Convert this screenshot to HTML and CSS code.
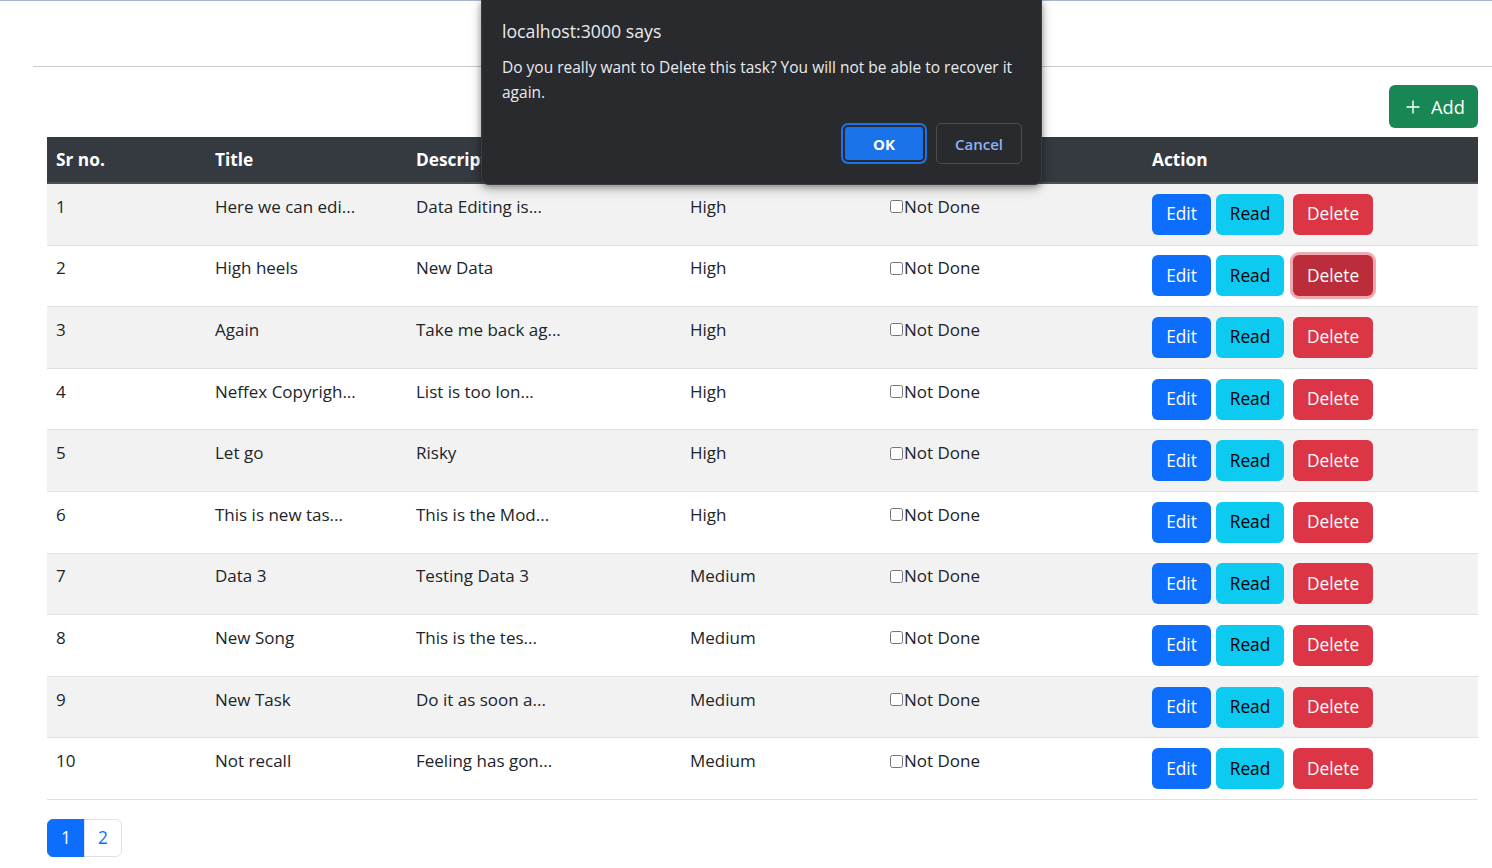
FILE: index.html
```html
<!DOCTYPE html>
<html lang="en">
<head>
<meta charset="utf-8">
<title>Tasks</title>
<link rel="stylesheet" href="styles.css">
</head>
<body>
<div class="topline"></div>
<div class="navspace"></div>
<hr class="rule">
<main class="main">
  <div class="toolbar">
    <button class="btn btn-add"><svg class="plus" viewBox="0 0 16 16" width="16" height="16"><path d="M8 1.5v13M1.5 8h13" stroke="#fff" stroke-width="1.4" fill="none"/></svg>Add</button>
  </div>
  <table class="tasks">
    <colgroup>
      <col class="c1"><col class="c2"><col class="c3"><col class="c4"><col class="c5"><col class="c6">
    </colgroup>
    <thead>
      <tr><th>Sr no.</th><th>Title</th><th>Description</th><th>Priority</th><th>Status</th><th>Action</th></tr>
    </thead>
    <tbody>
      <tr><td>1</td><td>Here we can edi...</td><td>Data Editing is...</td><td>High</td><td><label class="chk"><input type="checkbox">Not Done</label></td><td><div class="acts"><button class="btn btn-edit">Edit</button><button class="btn btn-read">Read</button><button class="btn btn-del">Delete</button></div></td></tr>
      <tr><td>2</td><td>High heels</td><td>New Data</td><td>High</td><td><label class="chk"><input type="checkbox">Not Done</label></td><td><div class="acts"><button class="btn btn-edit">Edit</button><button class="btn btn-read">Read</button><button class="btn btn-del is-focus">Delete</button></div></td></tr>
      <tr><td>3</td><td>Again</td><td>Take me back ag...</td><td>High</td><td><label class="chk"><input type="checkbox">Not Done</label></td><td><div class="acts"><button class="btn btn-edit">Edit</button><button class="btn btn-read">Read</button><button class="btn btn-del">Delete</button></div></td></tr>
      <tr><td>4</td><td>Neffex Copyrigh...</td><td>List is too lon...</td><td>High</td><td><label class="chk"><input type="checkbox">Not Done</label></td><td><div class="acts"><button class="btn btn-edit">Edit</button><button class="btn btn-read">Read</button><button class="btn btn-del">Delete</button></div></td></tr>
      <tr><td>5</td><td>Let go</td><td>Risky</td><td>High</td><td><label class="chk"><input type="checkbox">Not Done</label></td><td><div class="acts"><button class="btn btn-edit">Edit</button><button class="btn btn-read">Read</button><button class="btn btn-del">Delete</button></div></td></tr>
      <tr><td>6</td><td>This is new tas...</td><td>This is the Mod...</td><td>High</td><td><label class="chk"><input type="checkbox">Not Done</label></td><td><div class="acts"><button class="btn btn-edit">Edit</button><button class="btn btn-read">Read</button><button class="btn btn-del">Delete</button></div></td></tr>
      <tr><td>7</td><td>Data 3</td><td>Testing Data 3</td><td>Medium</td><td><label class="chk"><input type="checkbox">Not Done</label></td><td><div class="acts"><button class="btn btn-edit">Edit</button><button class="btn btn-read">Read</button><button class="btn btn-del">Delete</button></div></td></tr>
      <tr><td>8</td><td>New Song</td><td>This is the tes...</td><td>Medium</td><td><label class="chk"><input type="checkbox">Not Done</label></td><td><div class="acts"><button class="btn btn-edit">Edit</button><button class="btn btn-read">Read</button><button class="btn btn-del">Delete</button></div></td></tr>
      <tr><td>9</td><td>New Task</td><td>Do it as soon a...</td><td>Medium</td><td><label class="chk"><input type="checkbox">Not Done</label></td><td><div class="acts"><button class="btn btn-edit">Edit</button><button class="btn btn-read">Read</button><button class="btn btn-del">Delete</button></div></td></tr>
      <tr><td>10</td><td>Not recall</td><td>Feeling has gon...</td><td>Medium</td><td><label class="chk"><input type="checkbox">Not Done</label></td><td><div class="acts"><button class="btn btn-edit">Edit</button><button class="btn btn-read">Read</button><button class="btn btn-del">Delete</button></div></td></tr>
    </tbody>
  </table>
  <nav class="pager">
    <a class="page active">1</a><a class="page">2</a>
  </nav>
</main>

<div class="dialog" role="dialog">
  <div class="dlg-title">localhost:3000 says</div>
  <div class="dlg-msg">Do you really want to Delete this task? You will not be able to recover it again.</div>
  <div class="dlg-actions">
    <button class="dlg-btn dlg-ok">OK</button>
    <button class="dlg-btn dlg-cancel">Cancel</button>
  </div>
</div>
</body>
</html>
```

FILE: styles.css
```css
* { box-sizing: border-box; }
html, body { margin: 0; padding: 0; }
body {
  font-family: "Segoe UI", "Open Sans", "Noto Sans", sans-serif;
  color: #212529;
  background: #fff;
  font-size: 17px;
}
.topline { height: 1px; background: #a9b5cd; }
.navspace { height: 65px; }
.rule {
  margin: 0 0 0 33px;
  border: 0;
  border-top: 1px solid #c9c9c9;
  height: 0;
}
.main { padding: 18px 14px 0 47px; }
.toolbar { display: flex; justify-content: flex-end; margin-bottom: 9px; }

.btn {
  font-family: inherit;
  border: 1px solid transparent;
  border-radius: 6px;
  cursor: pointer;
  line-height: 26px;
  font-size: 17.3px;
  padding: 6px 13px;
  height: 41px;
}
.btn-add {
  background: #198754;
  color: #fff;
  height: 43px;
  width: 89px;
  padding: 0 14px 0 15px;
  font-size: 18.3px;
  display: flex;
  align-items: center;
  gap: 10px;
}
.plus { flex: none; }

.tasks {
  width: 100%;
  border-collapse: collapse;
  table-layout: fixed;
}
.c1 { width: 159px; }
.c2 { width: 201px; }
.c3 { width: 274px; }
.c4 { width: 199px; }
.c5 { width: 263px; }
.c6 { width: 335px; }
.tasks th, .tasks td {
  text-align: left;
  vertical-align: top;
  padding: 9.8px 9px;
  line-height: 26px;
  border-bottom: 1px solid #dee2e6;
}
.tasks thead th {
  background: #343a40;
  color: #fff;
  font-weight: 700;
  font-size: 17.3px;
  border-bottom: 2px solid #4b5157;
  padding: 10px 9px 9px;
}
.tasks tbody tr:nth-child(odd) td { background: #f2f2f2; }
.tasks tbody tr:nth-child(even) td { background: #fff; }

.chk { display: inline-flex; align-items: center; }
.chk input {
  margin: 0 1px 0 1px;
  width: 13px;
  height: 13px;
  position: relative;
  top: 0;
}

.acts { display: flex; gap: 5px; }
.btn-edit { background: #0d6efd; color: #fff; width: 59px; padding: 0; }
.btn-read { background: #0dcaf0; color: #000; width: 68px; padding: 0; }
.btn-del { background: #dc3545; color: #fff; width: 80px; padding: 0; margin-left: 4px; }
.btn-del.is-focus {
  background: #bb2d3b;
  box-shadow: 0 0 0 3px rgba(225, 83, 97, 0.5);
}

.pager { display: flex; margin-top: 19px; }
.page {
  width: 38px;
  height: 38px;
  display: flex;
  align-items: center;
  justify-content: center;
  border: 1px solid #dee2e6;
  color: #0d6efd;
  font-size: 17.3px;
}
.page + .page { margin-left: -1px; border-radius: 0 6px 6px 0; width: 38px; }
.page.active { background: #0d6efd; border-color: #0d6efd; color: #fff; border-radius: 6px 0 0 6px; }

.dialog {
  position: absolute;
  top: 0;
  left: 481px;
  width: 561px;
  height: 185px;
  background: #292a2d;
  border: 1px solid #3c3d40;
  border-top: 0;
  border-radius: 0 0 8px 8px;
  box-shadow: 0 2px 6px rgba(0,0,0,0.35), 0 4px 14px rgba(0,0,0,0.2);
  padding: 18px 19px 0 20px;
  color: #e8eaed;
}
.dlg-title { font-size: 17.7px; line-height: 26px; margin-bottom: 11px; }
.dlg-msg { font-size: 15.5px; line-height: 25px; }
.dlg-actions { display: flex; justify-content: flex-end; gap: 9px; margin-top: 18px; }
.dlg-btn {
  font-family: inherit;
  font-size: 15px;
  height: 41px;
  width: 86px;
  border-radius: 5px;
  cursor: pointer;
}
.dlg-ok {
  background: #1a73e8;
  color: #fff;
  font-weight: 700;
  border: 2px solid #292a2d;
  box-shadow: 0 0 0 2px #1a73e8;
  width: 82px;
  height: 37px;
  margin-top: 2px;
  margin-right: 2px;
}
.dlg-cancel {
  background: transparent;
  color: #8ab4f8;
  font-weight: 600;
  border: 1px solid #4a4c50;
}
```
